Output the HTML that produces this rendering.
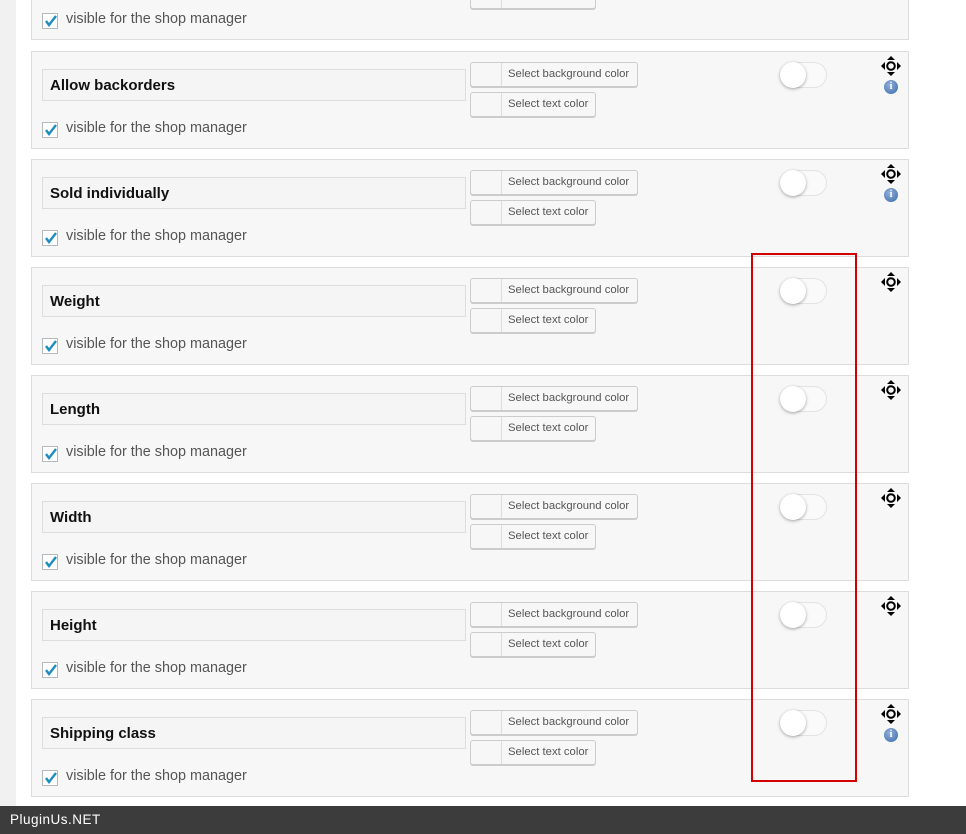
<!DOCTYPE html>
<html><head><meta charset="utf-8"><style>
*{box-sizing:border-box;margin:0;padding:0}
body{width:966px;height:834px;overflow:hidden;background:#fff;font-family:"Liberation Sans",sans-serif;position:relative}
.strip{position:absolute;left:0;top:0;width:16px;height:834px;background:#f1f1f1}
.p{position:absolute;left:31px;width:878px;height:98px;background:#f7f7f7;border:1px solid #dcdcdc}
.in{position:absolute;left:10px;top:17px;width:424px;height:32px;border:1px solid #ddd;background:#f5f5f5;font-weight:bold;font-size:15px;color:#111;padding:7px 7px 5px;line-height:18px}
.cb{position:absolute;left:10px;top:70px;width:16px;height:16px;border:1px solid #b4b9be;background:#fff}
.cb svg{position:absolute;left:1px;top:0px}
.vl{position:absolute;left:34px;top:68px;font-size:14.4px;color:#555}
.b{position:absolute;left:438px;height:25px;border:1px solid #ccc;border-radius:3px;background:#f7f7f7;box-shadow:0 1px 0 #ccc;font-size:11.3px;color:#555;line-height:23px}
.b i{display:inline-block;width:31px;height:23px;border-right:1px solid #ddd;vertical-align:top}
.b span{padding:0 6px}
.t{position:absolute;left:748px;top:10px;width:47px;height:26px;border-radius:13px;border:1px solid #e3e3e3;background:#fafafa}
.t:before{content:"";position:absolute;left:-1px;top:-1px;width:26px;height:26px;border-radius:50%;background:#fff;box-shadow:0 1px 3px rgba(0,0,0,.35)}
.mv{position:absolute;left:848px;top:3px}
.inf{position:absolute;left:852px;top:28px;width:14px;height:14px;border-radius:50%;background:radial-gradient(circle at 40% 35%,#8fb0dc,#3d69a8);color:#fff;font-size:10px;font-weight:bold;text-align:center;line-height:14px;font-family:"Liberation Serif",serif}
.red{position:absolute;left:751px;top:253px;width:106px;height:529px;border:2px solid #d40000}
.foot{position:absolute;left:0;top:806px;width:966px;height:28px;background:#3c3c3c;color:#fff;font-size:13.5px;line-height:28px;padding-left:10px;letter-spacing:.5px}
</style></head><body>
<div class="strip"></div>

<div class="p" style="top:-58px">
<div class="b" style="top:41px;width:126px"><i></i><span>Select text color</span></div>
<div class="cb"><svg width="14" height="14" viewBox="0 0 14 14"><path d="M2 7l3 4 7-9" stroke="#1e8cbe" stroke-width="2.4" fill="none"/></svg></div><div class="vl">visible for the shop manager</div>
</div>

<div class="p" style="top:51px"><div class="in">Allow backorders</div>
<div class="b" style="top:10px;width:168px"><i></i><span>Select background color</span></div>
<div class="b" style="top:40px;width:126px"><i></i><span>Select text color</span></div>
<div class="cb"><svg width="14" height="14" viewBox="0 0 14 14"><path d="M2 7l3 4 7-9" stroke="#1e8cbe" stroke-width="2.4" fill="none"/></svg></div><div class="vl">visible for the shop manager</div>
<div class="t"></div>
<svg class="mv" width="22" height="22" viewBox="0 0 22 22"><path d="M11 1l4 4h-8zM11 21l4-4h-8zM1 11l4-4v8zM21 11l-4-4v8z" fill="#000"/><circle cx="11" cy="11" r="3.8" fill="none" stroke="#000" stroke-width="2"/></svg>
<div class="inf">i</div></div>

<div class="p" style="top:159px"><div class="in">Sold individually</div>
<div class="b" style="top:10px;width:168px"><i></i><span>Select background color</span></div>
<div class="b" style="top:40px;width:126px"><i></i><span>Select text color</span></div>
<div class="cb"><svg width="14" height="14" viewBox="0 0 14 14"><path d="M2 7l3 4 7-9" stroke="#1e8cbe" stroke-width="2.4" fill="none"/></svg></div><div class="vl">visible for the shop manager</div>
<div class="t"></div>
<svg class="mv" width="22" height="22" viewBox="0 0 22 22"><path d="M11 1l4 4h-8zM11 21l4-4h-8zM1 11l4-4v8zM21 11l-4-4v8z" fill="#000"/><circle cx="11" cy="11" r="3.8" fill="none" stroke="#000" stroke-width="2"/></svg>
<div class="inf">i</div></div>

<div class="p" style="top:267px"><div class="in">Weight</div>
<div class="b" style="top:10px;width:168px"><i></i><span>Select background color</span></div>
<div class="b" style="top:40px;width:126px"><i></i><span>Select text color</span></div>
<div class="cb"><svg width="14" height="14" viewBox="0 0 14 14"><path d="M2 7l3 4 7-9" stroke="#1e8cbe" stroke-width="2.4" fill="none"/></svg></div><div class="vl">visible for the shop manager</div>
<div class="t"></div>
<svg class="mv" width="22" height="22" viewBox="0 0 22 22"><path d="M11 1l4 4h-8zM11 21l4-4h-8zM1 11l4-4v8zM21 11l-4-4v8z" fill="#000"/><circle cx="11" cy="11" r="3.8" fill="none" stroke="#000" stroke-width="2"/></svg></div>

<div class="p" style="top:375px"><div class="in">Length</div>
<div class="b" style="top:10px;width:168px"><i></i><span>Select background color</span></div>
<div class="b" style="top:40px;width:126px"><i></i><span>Select text color</span></div>
<div class="cb"><svg width="14" height="14" viewBox="0 0 14 14"><path d="M2 7l3 4 7-9" stroke="#1e8cbe" stroke-width="2.4" fill="none"/></svg></div><div class="vl">visible for the shop manager</div>
<div class="t"></div>
<svg class="mv" width="22" height="22" viewBox="0 0 22 22"><path d="M11 1l4 4h-8zM11 21l4-4h-8zM1 11l4-4v8zM21 11l-4-4v8z" fill="#000"/><circle cx="11" cy="11" r="3.8" fill="none" stroke="#000" stroke-width="2"/></svg></div>

<div class="p" style="top:483px"><div class="in">Width</div>
<div class="b" style="top:10px;width:168px"><i></i><span>Select background color</span></div>
<div class="b" style="top:40px;width:126px"><i></i><span>Select text color</span></div>
<div class="cb"><svg width="14" height="14" viewBox="0 0 14 14"><path d="M2 7l3 4 7-9" stroke="#1e8cbe" stroke-width="2.4" fill="none"/></svg></div><div class="vl">visible for the shop manager</div>
<div class="t"></div>
<svg class="mv" width="22" height="22" viewBox="0 0 22 22"><path d="M11 1l4 4h-8zM11 21l4-4h-8zM1 11l4-4v8zM21 11l-4-4v8z" fill="#000"/><circle cx="11" cy="11" r="3.8" fill="none" stroke="#000" stroke-width="2"/></svg></div>

<div class="p" style="top:591px"><div class="in">Height</div>
<div class="b" style="top:10px;width:168px"><i></i><span>Select background color</span></div>
<div class="b" style="top:40px;width:126px"><i></i><span>Select text color</span></div>
<div class="cb"><svg width="14" height="14" viewBox="0 0 14 14"><path d="M2 7l3 4 7-9" stroke="#1e8cbe" stroke-width="2.4" fill="none"/></svg></div><div class="vl">visible for the shop manager</div>
<div class="t"></div>
<svg class="mv" width="22" height="22" viewBox="0 0 22 22"><path d="M11 1l4 4h-8zM11 21l4-4h-8zM1 11l4-4v8zM21 11l-4-4v8z" fill="#000"/><circle cx="11" cy="11" r="3.8" fill="none" stroke="#000" stroke-width="2"/></svg></div>

<div class="p" style="top:699px"><div class="in">Shipping class</div>
<div class="b" style="top:10px;width:168px"><i></i><span>Select background color</span></div>
<div class="b" style="top:40px;width:126px"><i></i><span>Select text color</span></div>
<div class="cb"><svg width="14" height="14" viewBox="0 0 14 14"><path d="M2 7l3 4 7-9" stroke="#1e8cbe" stroke-width="2.4" fill="none"/></svg></div><div class="vl">visible for the shop manager</div>
<div class="t"></div>
<svg class="mv" width="22" height="22" viewBox="0 0 22 22"><path d="M11 1l4 4h-8zM11 21l4-4h-8zM1 11l4-4v8zM21 11l-4-4v8z" fill="#000"/><circle cx="11" cy="11" r="3.8" fill="none" stroke="#000" stroke-width="2"/></svg>
<div class="inf">i</div></div>

<div class="red"></div>
<div class="foot">PluginUs.NET</div>
</body></html>
